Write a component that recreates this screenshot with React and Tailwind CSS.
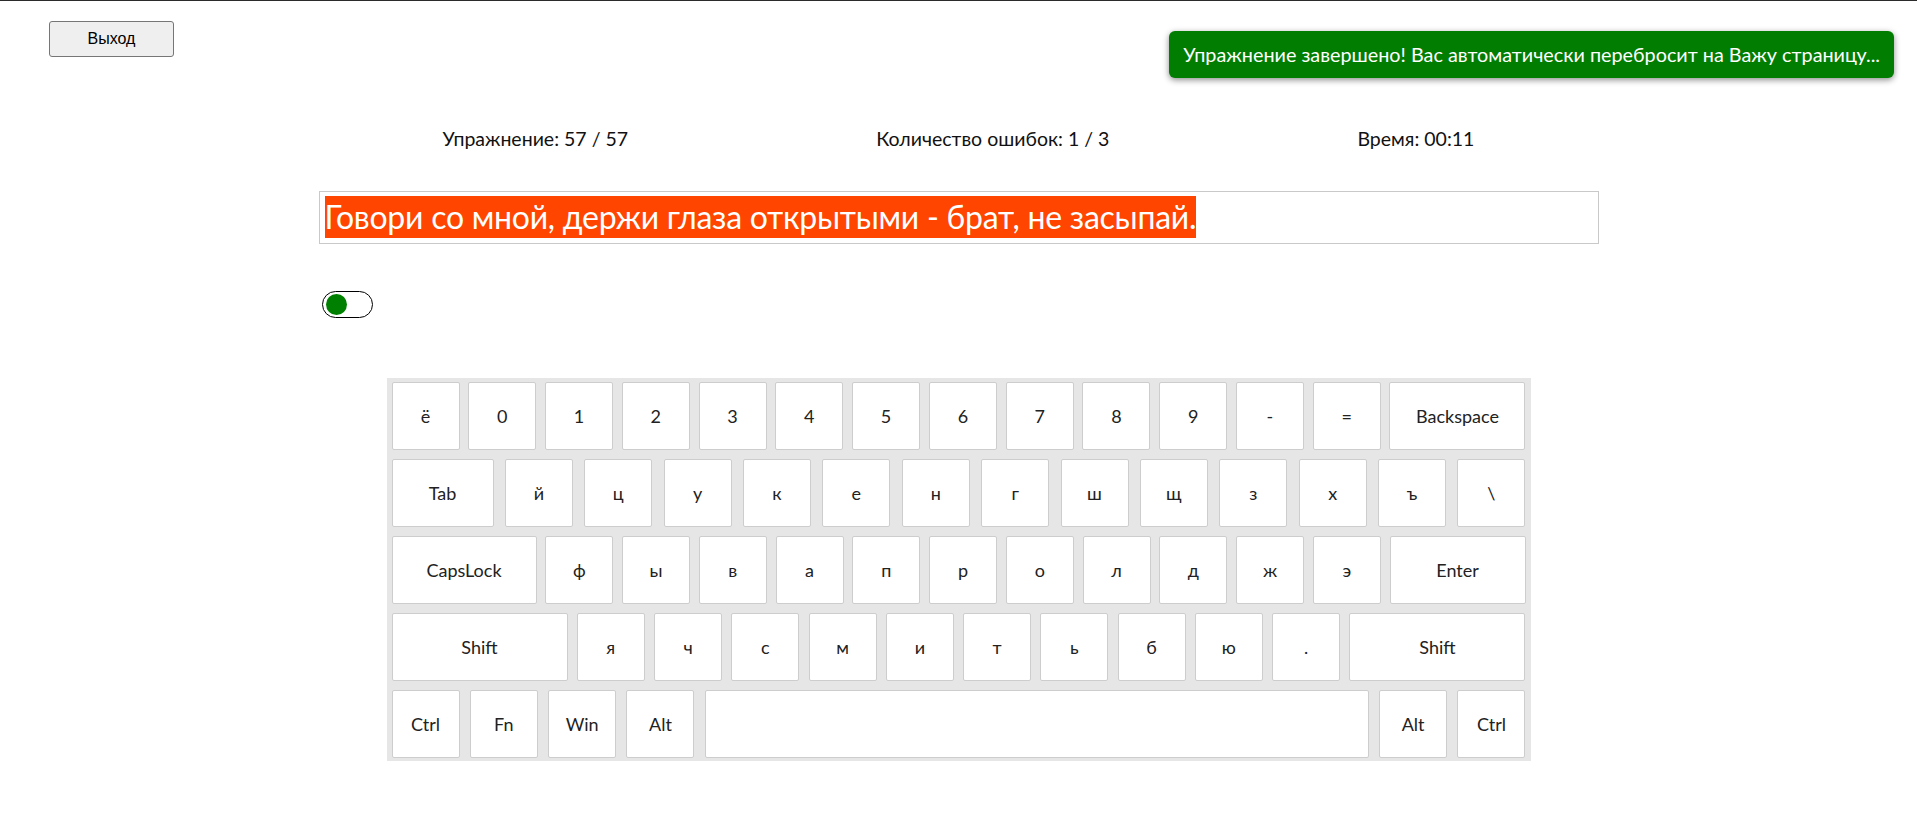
import React from 'react';

// keyboard layout: [label, width class]
const rows = [
  [
    ['ё'], ['0'], ['1'], ['2'], ['3'], ['4'], ['5'], ['6'], ['7'], ['8'], ['9'], ['-'], ['='],
    ['Backspace', 'w-[136px]'],
  ],
  [
    ['Tab', 'w-[102px]'],
    ['й'], ['ц'], ['у'], ['к'], ['е'], ['н'], ['г'], ['ш'], ['щ'], ['з'], ['х'], ['ъ'], ['\\'],
  ],
  [
    ['CapsLock', 'w-[145px]'],
    ['ф'], ['ы'], ['в'], ['а'], ['п'], ['р'], ['о'], ['л'], ['д'], ['ж'], ['э'],
    ['Enter', 'w-[136px]'],
  ],
  [
    ['Shift', 'w-[176px]'],
    ['я'], ['ч'], ['с'], ['м'], ['и'], ['т'], ['ь'], ['б'], ['ю'], ['.'],
    ['Shift', 'w-[176px]'],
  ],
  [
    ['Ctrl'], ['Fn'], ['Win'], ['Alt'],
    ['', 'w-[664px]'],
    ['Alt'], ['Ctrl'],
  ],
];

function Key({ label, width }) {
  return (
    <div
      className={
        'flex h-[68px] items-center justify-center rounded-[2px] border border-[#cdcdcd] bg-white text-[18px] text-[#222] ' +
        (width || 'w-[68px]')
      }
    >
      {label}
    </div>
  );
}

function Keyboard() {
  return (
    <div className="mx-auto flex w-[1144px] flex-col gap-[9px] bg-[#e6e6e6] pt-[4px] pb-[3px] pl-[5px] pr-[5px]">
      {rows.map((row, i) => (
        <div key={i} className="flex justify-between">
          {row.map(([label, width], j) => (
            <Key key={j} label={label} width={width} />
          ))}
        </div>
      ))}
    </div>
  );
}

export default function App() {
  return (
    <div className="relative min-h-[832px] w-full border-t border-[#2b2b2b] bg-white font-[family-name:Lato,'Open_Sans',sans-serif] text-black">
      {/* Exit button */}
      <div className="pt-[20px] pl-[49px]">
        <button className="h-[36px] w-[125px] rounded-[3px] border border-[#767676] bg-[#efefef] font-[family-name:'Liberation_Sans',Arial,sans-serif] text-[16px] text-black">
          Выход
        </button>
      </div>

      {/* Toast */}
      <div className="absolute top-[30px] right-[23px] rounded-[6px] bg-[#017d01] px-[14px] py-[10px] text-[19.8px] leading-[27px] text-white shadow-[0_2px_6px_rgba(0,0,0,0.45)]">
        Упражнение завершено! Вас автоматически перебросит на Важу страницу...
      </div>

      <div className="mx-auto w-[1280px]">
        {/* Stats */}
        <div className="mt-[68px] flex justify-around text-[19.5px] leading-[27px] text-[#111]">
          <span>Упражнение: 57 / 57</span>
          <span>Количество ошибок: 1 / 3</span>
          <span>Время: 00:11</span>
        </div>

        {/* Text line */}
        <div className="mt-[39px] h-[53px] border border-[#c9c9c9] px-[5px] pt-[4px]">
          <span className="inline-block bg-[#ff4500] text-[32px] leading-[42px] tracking-[-0.25px] text-white">
            Говори со мной, держи глаза открытыми - брат, не засыпай.
          </span>
        </div>

        {/* Toggle */}
        <div className="mt-[47px] ml-[3px] flex h-[27px] w-[51px] items-center rounded-full border border-black px-[3px]">
          <div className="h-[21px] w-[21px] rounded-full bg-[#008000]" />
        </div>
      </div>

      <div className="mt-[60px]">
        <Keyboard />
      </div>
    </div>
  );
}
